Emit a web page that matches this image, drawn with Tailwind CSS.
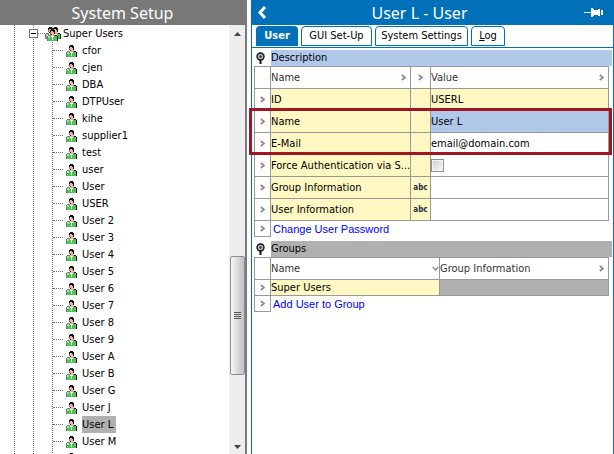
<!DOCTYPE html>
<html lang="en">
  <head>
    <meta charset="UTF-8" />
    <meta name="viewport" content="width=device-width, initial-scale=1.0" />
    <title>System Setup</title>
    <script src="https://cdn.jsdelivr.net/npm/@tailwindcss/browser@4"></script>
  </head>
  <body
    class="flex h-screen overflow-hidden bg-white font-['DejaVu_Sans_Condensed','DejaVu_Sans',sans-serif] text-[11px] leading-4 text-black"
  >
    <svg class="hidden">
      <symbol id="person" viewBox="0 0 11 12" shape-rendering="crispEdges">
        <path fill="#777" d="M3 1h1v4H3zM0 7h1v5H0zM1 6h2v1H1z" />
        <path fill="#f5b0b0" d="M4 2h4v4H7v1H4z" />
        <path fill="#111" d="M4 0h3v1h1v4h-1V3H6V2H4v1H3V1h1zM4 5h1v1H4z" />
        <path fill="#4cc552" d="M1 7h2V6h1v1h3V6h1v1h2v5H1z" />
        <path fill="#a5e8a5" d="M1 7h2v2H1z" />
        <path fill="#111" d="M8 6h2v1h1v5h-1V7H8z" />
        <path fill="#fff" d="M4 7h3v1H6v3H5V8H4z" />
      </symbol>
      <symbol id="next" viewBox="0 0 5 7">
        <path d="M.8 1 4 3.5.8 6" fill="none" stroke="#8a8a8a" stroke-width="1.700" />
      </symbol>
      <symbol id="knob" viewBox="0 0 9 13">
        <path d="M4.500 7v5" stroke="#111" stroke-width="2" />
        <circle cx="4.500" cy="4.500" r="3.500" fill="#a9bdcc" stroke="#111" stroke-width="1.400" />
        <circle cx="4.500" cy="4.500" r="1.200" fill="#333" />
      </symbol>
    </svg>

    <aside class="flex w-[247px] shrink-0 flex-col border-r-2 border-[#7b7b7b]">
      <h1 class="h-[25px] shrink-0 bg-[#787878] text-center font-['Noto_Sans',sans-serif] text-[16px] leading-[26px] text-white">System Setup</h1>
      <div class="flex min-h-0 flex-1">
        <div class="flex min-w-0 flex-1 overflow-hidden">
          <div class="ml-[14px] w-[19px] shrink-0 border-l border-dotted border-[#777]"></div>
          <div class="relative flex-1 border-l border-dotted border-[#777]">
            <div class="flex h-[17px] items-center">
              <button aria-label="Collapse" class="absolute -left-[5px] flex size-[9px] items-center justify-center border border-[#777] bg-white">
                <span class="h-px w-[5px] bg-black"></span>
              </button>
              <span class="ml-1 w-[7px] border-t border-dotted border-[#777]"></span>
              <svg class="h-[14px] w-4" viewBox="0 0 16 14">
                <use href="#person" x="0" y="0" width="11" height="12" />
                <use href="#person" x="5" y="0" width="11" height="12" />
                <use href="#person" x="2" y="2" width="11" height="12" />
              </svg>
              <a href="#" class="ml-[2px]">Super Users</a>
            </div>
            <ul id="users" class="ml-[18px] border-l border-dotted border-[#777]"></ul>
          </div>
        </div>
        <div class="flex w-4 flex-col items-center bg-[#eeeeee]">
          <svg class="mt-[7px] h-1 w-[7px] shrink-0" viewBox="0 0 7 4"><path fill="#444" d="M0 4 3.500 0 7 4z" /></svg>
          <div class="h-[220px] shrink-0"></div>
          <div class="flex h-[119px] w-[15px] shrink-0 flex-col items-center justify-center gap-px rounded-xs border border-[#8e8e8e] bg-linear-to-r from-[#f7f7f7] to-[#bfc0c5]">
            <span class="h-px w-[7px] bg-[#555]"></span>
            <span class="h-px w-[7px] bg-[#555]"></span>
            <span class="h-px w-[7px] bg-[#555]"></span>
            <span class="h-px w-[7px] bg-[#555]"></span>
          </div>
          <svg class="mt-auto mb-[5px] h-1 w-[7px] shrink-0" viewBox="0 0 7 4"><path fill="#444" d="M0 0 3.500 4 7 0z" /></svg>
        </div>
      </div>
    </aside>

    <main class="ml-[4px] flex min-w-0 flex-1 flex-col border-x border-[#0071b9]">
      <header class="flex h-[25px] shrink-0 items-center bg-[#0071b9] px-[5px] text-white">
        <button aria-label="Back">
          <svg class="h-[13px] w-[10px]" viewBox="0 0 10 13"><path d="M8 1 3 6.500 8 12" fill="none" stroke="#fff" stroke-width="3" /></svg>
        </button>
        <h2 class="flex-1 pr-3 text-center font-['Noto_Sans',sans-serif] text-[16px] leading-[26px]">User L - User</h2>
        <button aria-label="Pin" class="mr-1">
          <svg class="h-[11px] w-[20px]" viewBox="0 0 20 11" shape-rendering="crispEdges"><path fill="#fff" d="M0 5h7V1h2v1h1v1h4V2h2v7h-2V8h-4v1H9v1H7V6H0zM17 3h2v5h-2z" /></svg>
        </button>
      </header>
      <nav class="mt-px flex h-[22px] shrink-0 gap-[3px] border-b border-[#0071b9] pl-1">
        <button class="h-5 w-[42px] rounded-t bg-[#0071b9] font-bold text-white">User</button>
        <button class="h-5 w-[71px] rounded-t border border-[#0071b9]">GUI Set-Up</button>
        <button class="h-5 w-[93px] rounded-t border border-[#0071b9]">System Settings</button>
        <button class="h-5 w-[34px] rounded-t border border-[#0071b9]"><u>L</u>og</button>
      </nav>

      <section class="mt-[2px] ml-[2px]">
        <div class="flex h-4 items-center">
          <svg class="mr-[6px] ml-[2px] h-[13px] w-[9px]"><use href="#knob" /></svg>
          <h3 class="mr-px flex-1 bg-[#b0c8ea]">Description</h3>
        </div>
        <div class="relative mr-1">
          <table class="w-full table-fixed border-collapse [&_td]:h-[22px] [&_td]:border [&_td]:border-[#999] [&_th]:h-[22px] [&_th]:border [&_th]:border-[#999] [&_th]:text-left [&_th]:font-normal [&_th]:text-[#333]">
            <colgroup>
              <col class="w-4" />
              <col class="w-[140px]" />
              <col class="w-5" />
              <col />
            </colgroup>
            <thead>
              <tr>
                <th></th>
                <th><div class="flex items-center justify-between pr-1">Name<svg class="h-[7px] w-[5px]"><use href="#next" /></svg></div></th>
                <th><svg class="mx-auto h-[7px] w-[5px]"><use href="#next" /></svg></th>
                <th><div class="flex items-center justify-between pr-1">Value<svg class="h-[7px] w-[5px]"><use href="#next" /></svg></div></th>
              </tr>
            </thead>
            <tbody>
              <tr class="bg-[#fff8c2]">
                <td class="bg-white"><svg class="mx-auto h-[7px] w-[5px]"><use href="#next" /></svg></td>
                <td>ID</td>
                <td></td>
                <td>USERL</td>
              </tr>
              <tr class="bg-[#fff8c2]">
                <td class="bg-white"><svg class="mx-auto h-[7px] w-[5px]"><use href="#next" /></svg></td>
                <td>Name</td>
                <td></td>
                <td class="bg-[#b0c8ea]">User L</td>
              </tr>
              <tr class="bg-[#fff8c2]">
                <td class="bg-white"><svg class="mx-auto h-[7px] w-[5px]"><use href="#next" /></svg></td>
                <td>E-Mail</td>
                <td></td>
                <td class="bg-white">email@domain.com</td>
              </tr>
              <tr class="bg-[#fff8c2]">
                <td class="bg-white"><svg class="mx-auto h-[7px] w-[5px]"><use href="#next" /></svg></td>
                <td class="whitespace-nowrap"><label for="force">Force Authentication via S...</label></td>
                <td></td>
                <td class="bg-white"><input id="force" type="checkbox" class="block size-[13px] appearance-none border border-[#8e8f8f] bg-linear-to-br from-[#ccd0d6] to-[#f6f6f6] shadow-[inset_0_0_0_1px_#f4f4f4]" /></td>
              </tr>
              <tr class="bg-[#fff8c2]">
                <td class="bg-white"><svg class="mx-auto h-[7px] w-[5px]"><use href="#next" /></svg></td>
                <td>Group Information</td>
                <td class="text-center text-[8px] font-bold text-[#1c2f4a]">abc</td>
                <td class="bg-white"></td>
              </tr>
              <tr class="bg-[#fff8c2]">
                <td class="bg-white"><svg class="mx-auto h-[7px] w-[5px]"><use href="#next" /></svg></td>
                <td>User Information</td>
                <td class="text-center text-[8px] font-bold text-[#1c2f4a]">abc</td>
                <td class="bg-white"></td>
              </tr>
            </tbody>
          </table>
          <div class="absolute top-[42px] -right-[3px] -left-[5px] h-[47px] border-3 border-[#9e1621]"></div>
        </div>
        <div class="flex h-4 items-center">
          <span class="flex h-4 w-[17px] items-center justify-center border border-t-0 border-[#999]"><svg class="h-[7px] w-[5px]"><use href="#next" /></svg></span>
          <a href="#" class="ml-[2px] font-['Liberation_Sans',sans-serif] text-[#0000f5]">Change User Password</a>
        </div>
      </section>

      <section class="mt-1 ml-[2px]">
        <div class="flex h-4 items-center">
          <svg class="mr-[6px] ml-[2px] h-[13px] w-[9px]"><use href="#knob" /></svg>
          <h3 class="mr-px flex-1 bg-[#b0b0b0]">Groups</h3>
        </div>
        <div class="mr-1">
          <table class="w-full table-fixed border-collapse [&_td]:h-4 [&_td]:border [&_td]:border-[#999] [&_th]:h-[22px] [&_th]:border [&_th]:border-[#999] [&_th]:text-left [&_th]:font-normal [&_th]:text-[#333]">
            <colgroup>
              <col class="w-4" />
              <col class="w-[169px]" />
              <col />
            </colgroup>
            <thead>
              <tr>
                <th></th>
                <th><div class="flex items-center justify-between">Name<svg class="h-[5px] w-[7px]" viewBox="0 0 7 5"><path d="M.8 1 3.500 4 6.200 1" fill="none" stroke="#8a8a8a" stroke-width="1.500" /></svg></div></th>
                <th><div class="flex items-center justify-between pr-1">Group Information<svg class="h-[7px] w-[5px]"><use href="#next" /></svg></div></th>
              </tr>
            </thead>
            <tbody>
              <tr>
                <td><svg class="mx-auto h-[7px] w-[5px]"><use href="#next" /></svg></td>
                <td class="bg-[#fff8c2] leading-[15px]">Super Users</td>
                <td class="bg-[#b0b0b0]"></td>
              </tr>
            </tbody>
          </table>
        </div>
        <div class="flex h-4 items-center">
          <span class="flex h-4 w-[17px] items-center justify-center border border-t-0 border-[#999]"><svg class="h-[7px] w-[5px]"><use href="#next" /></svg></span>
          <a href="#" class="ml-[2px] font-['Liberation_Sans',sans-serif] text-[#0000f5]">Add User to Group</a>
        </div>
      </section>
    </main>

    <script>
      const users = ["cfor", "cjen", "DBA", "DTPUser", "kihe", "supplier1", "test", "user", "User", "USER", "User 2", "User 3", "User 4", "User 5", "User 6", "User 7", "User 8", "User 9", "User A", "User B", "User G", "User J", "User L", "User M", ""];
      const selected = "User L";
      const list = document.getElementById("users");
      users.forEach((name) => {
        const bg = name === selected ? "bg-[#b0b0b0]" : "";
        list.innerHTML += `
          <li class="flex h-[17px] items-center">
            <span class="w-[10px] border-t border-dotted border-[#777]"></span>
            <svg class="mt-px ml-[3px] h-3 w-[11px]"><use href="#person" /></svg>
            <a href="#" class="ml-[5px] h-[17px] pr-[3px] leading-[17px] ${bg}">${name}</a>
          </li>`;
      });
    </script>
  </body>
</html>
